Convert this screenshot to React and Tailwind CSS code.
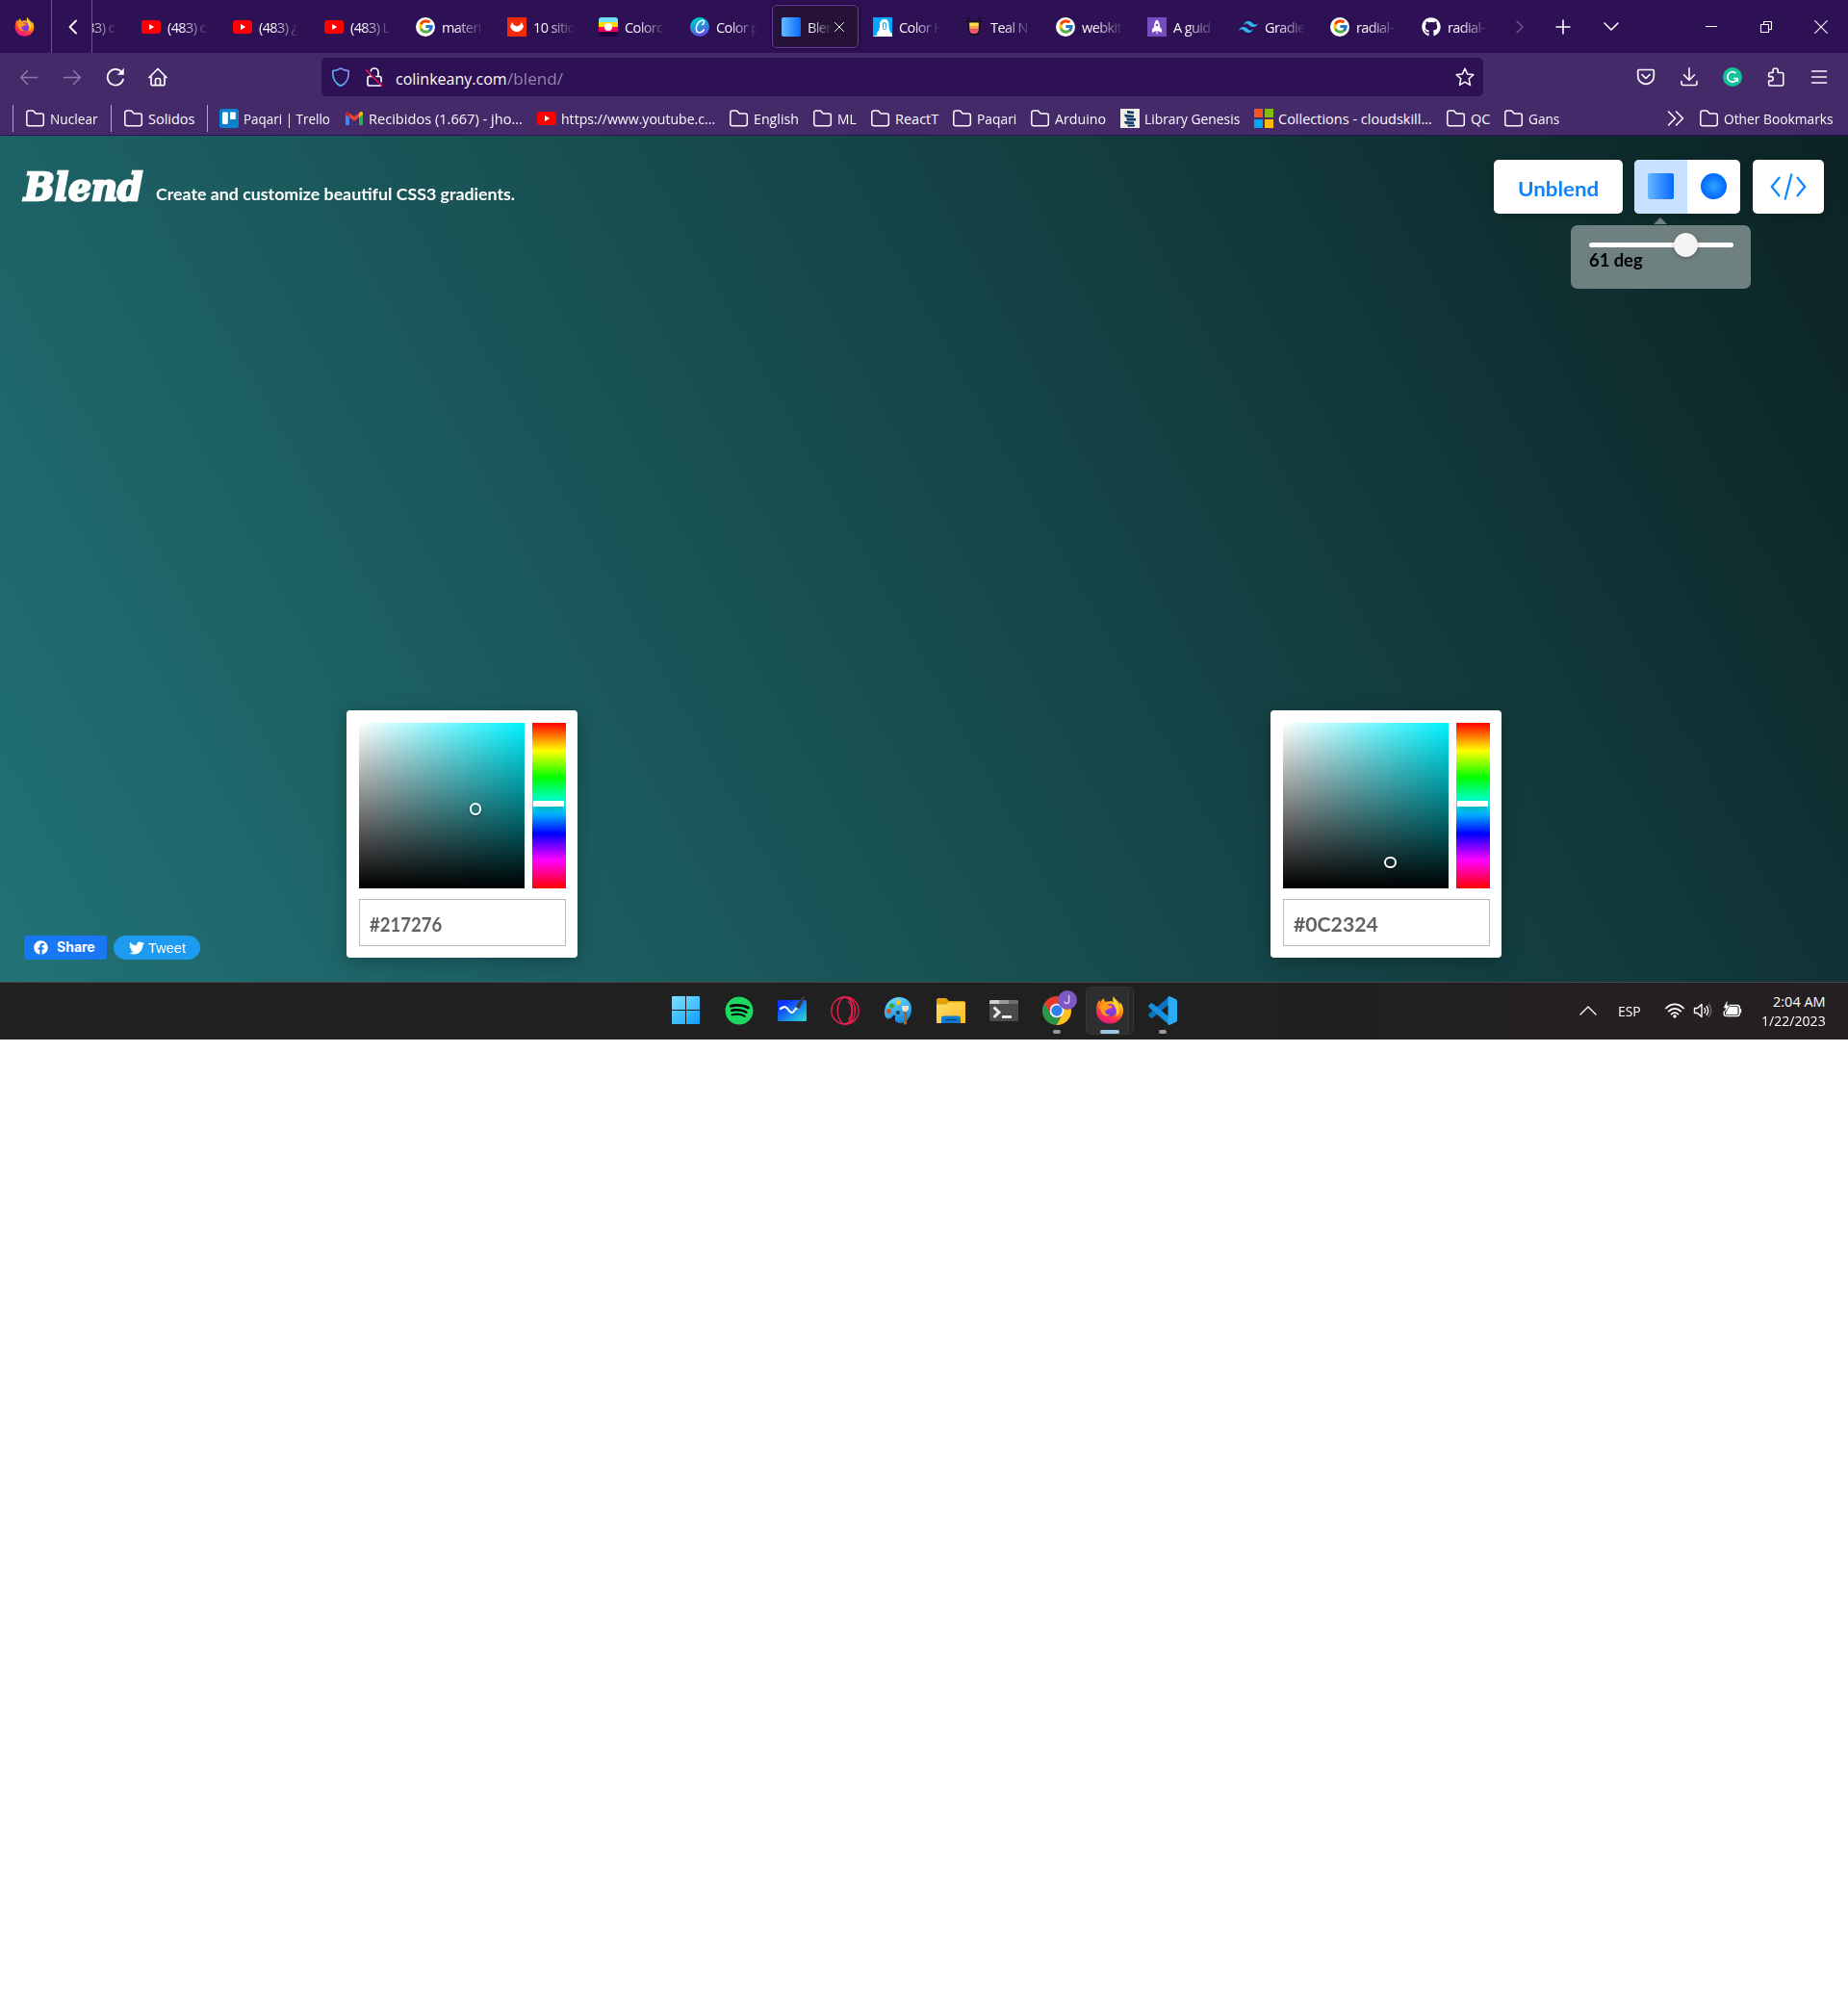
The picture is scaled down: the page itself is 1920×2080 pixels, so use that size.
import React, { useLayoutEffect, useRef, useState } from "react";
import { FcGoogle } from "react-icons/fc";
import { FaFacebook, FaTwitter, FaGithub, FaSpotify } from "react-icons/fa";
import { SiTailwindcss } from "react-icons/si";

/* Text that is squeezed or stretched to fill a known width */
function Fit({ w, className = "", origin = "left center", children }) {
  const ref = useRef(null);
  const [k, setK] = useState(1);
  useLayoutEffect(() => {
    const measure = () => {
      const n = ref.current.offsetWidth;
      if (n) setK(w / n);
    };
    measure();
    document.fonts?.ready.then(measure);
  }, [w]);
  return (
    <span className="flex shrink-0" style={{ width: w }}>
      <span
        ref={ref}
        className={"shrink-0 whitespace-nowrap " + className}
        style={{ transform: `scaleX(${k})`, transformOrigin: origin }}
      >
        {children}
      </span>
    </span>
  );
}

function Stroke({ className = "", size = 20, w = 1.5, children, vb = "0 0 20 20" }) {
  return (
    <svg
      width={size}
      height={size}
      viewBox={vb}
      className={"shrink-0 " + className}
      fill="none"
      stroke="currentColor"
      strokeWidth={w}
      strokeLinecap="round"
      strokeLinejoin="round"
    >
      {children}
    </svg>
  );
}

function Firefox({ size, id }) {
  return (
    <svg width={size} height={size} viewBox="0 0 32 32" className="shrink-0">
      <defs>
        <linearGradient id={id + "a"} x1="0.8" y1="0" x2="0.3" y2="1">
          <stop offset="0" stopColor="#fff44f" />
          <stop offset=".4" stopColor="#ff980e" />
          <stop offset=".7" stopColor="#ff3647" />
          <stop offset="1" stopColor="#e31587" />
        </linearGradient>
        <radialGradient id={id + "b"} cx=".6" cy=".3" r=".7">
          <stop offset="0" stopColor="#b833e1" />
          <stop offset="1" stopColor="#5b3fe0" />
        </radialGradient>
      </defs>
      <path
        d="M20 1c-1 3-.5 4.500 1.500 6.500C19 6.500 14 6 11.500 7.500 10 6.500 9.500 5 9.700 3.500 7.500 4.500 6.300 6.500 5.700 8 5 7.500 4.700 6 4.700 5 2.500 7.500 1 11.500 1 17c0 8 6.500 14.500 15 14.500S31 25 31 17c0-4-1.500-7.500-4-9.500.3 1 .4 2 .2 3C26 6 21.500 5 20 1z"
        fill={`url(#${id}a)`}
      />
      <circle cx="16.500" cy="16.500" r="7" fill={`url(#${id}b)`} />
      <path d="M4 14c2-5 8-6 11-2.500 1.500 0 3.500.3 4 1.200-.8 1.600-3 1.600-4.500 2.300-1.500.8-1.700 2-3.500 2-.5 3 2.500 5.500 6 4.500-4 3-10 1-11-5z" fill="#ff9a1c" />
      <path d="M19 3c2 5 8 7 7.500 15-.5 3-2 5-3.500 6 1-4 1-8-2-12 1-3-2-5-2-9z" fill="#ffd93b" opacity=".85" />
    </svg>
  );
}

function YouTube() {
  return (
    <svg width="20" height="20" viewBox="0 0 20 20" className="shrink-0">
      <rect x="0" y="3" width="20" height="14" rx="3.200" fill="#f00" />
      <path d="M8 7l5.200 3L8 13z" fill="#fff" />
    </svg>
  );
}

function Google() {
  return (
    <span className="flex size-[20px] shrink-0 items-center justify-center rounded-full bg-white">
      <FcGoogle size={17} />
    </span>
  );
}

function Hostinger() {
  return (
    <svg width="20" height="20" viewBox="0 0 20 20" className="shrink-0">
      <rect width="20" height="20" fill="#f52a06" />
      <path d="M3 9.500L5.200 5l1.300 2.800L10 9.500l3.500-1.700L14.800 5 17 9.500l-2 3.500-3.500 2h-3L5 13z" fill="#fff" />
    </svg>
  );
}

function Coloro() {
  return (
    <svg width="20" height="20" viewBox="0 0 20 20" className="shrink-0">
      <path d="M0 5V3q0-3 3-3h14q3 0 3 3v2z" fill="#70dff8" />
      <rect y="5" width="20" height="5" fill="#ffdb00" />
      <rect y="10" width="20" height="5" fill="#f5005f" />
      <path d="M0 15h20v2q0 3-3 3H3q-3 0-3-3z" fill="#1f0440" />
      <circle cx="10" cy="10" r="4" fill="#fff" />
    </svg>
  );
}

function Canva() {
  return (
    <span className="flex size-[20px] shrink-0 items-center justify-center rounded-full bg-[linear-gradient(160deg,#00c4cc_20%,#3a7be0_60%,#7d2ae8)]">
      <Stroke size={15} w={1.900} className="text-white" vb="1 1 18 18">
        <path d="M12.500 7.500c2 0 3.500-4.500 1-5C9.500 1.700 5 7.500 5 12.500c0 3.500 1.500 5 4 5 2.300 0 4.300-1.500 5.500-3.500" />
      </Stroke>
    </span>
  );
}

function BlendIcon() {
  return <span className="size-[20px] shrink-0 rounded-[2px] bg-[linear-gradient(90deg,#66b8ff,#0a6cff)]" />;
}

function ColorHunt() {
  return (
    <svg width="20" height="20" viewBox="0 0 20 20" className="shrink-0">
      <rect width="20" height="20" fill="#00a8ff" />
      <path d="M6 20l-2.500-3.500C6 15 7 12 7 7.500 7 4 9 2 12 2s4.500 2 4.500 5.500c0 4 .5 6 2 8.500l1.500 1v3z" fill="#fff" />
      <path d="M9.800 7q2-4 4.400 0l-.4 5q-1.800 2-3.600 0z" fill="#00a8ff" />
      <path d="M11 7q1-1.500 2 0l.2 5h-2.400z" fill="#fff" />
      <path d="M0 20q6-3 11-2v2z" fill="#fff" />
    </svg>
  );
}

function Teal() {
  return (
    <svg width="20" height="20" viewBox="0 0 20 20" className="shrink-0">
      <circle cx="4.500" cy="1.500" r="1.200" fill="#17121c" />
      <circle cx="15.500" cy="1.500" r="1.200" fill="#17121c" />
      <path d="M.5 4.500h19M4.300 4.500V12q0 6 5.700 6t5.700-6V4.500" fill="none" stroke="#17121c" strokeWidth="2" />
      <path d="M5.200 5.500h9.600V9H5.200z" fill="#ffe14d" />
      <path d="M5.200 9h9.600v3.500H5.200z" fill="#ff9a56" />
      <path d="M5.200 12.500h9.600q0 4.500-4.800 4.500t-4.800-4.500z" fill="#f4586f" />
    </svg>
  );
}

function Rocket() {
  return (
    <svg width="20" height="20" viewBox="0 0 20 20" className="shrink-0">
      <rect width="20" height="20" fill="#744cbc" />
      <path d="M10 2.500C7.500 4.500 7 7 7 10L5 12.500V16l3-1.500h4l3 1.500v-3.500L13 10c0-3-.5-5.500-3-7.500zM9 15.500h2L10 18z" fill="#fff" />
      <circle cx="10" cy="8" r="1.300" fill="#744cbc" />
    </svg>
  );
}

function GitHub() {
  return <FaGithub size={20} className="shrink-0 text-white" />;
}
function Tailwind() {
  return <SiTailwindcss size={20} className="shrink-0 text-[#31b5f0]" />;
}

const TABS = [
  [YouTube, "(483) c"],
  [YouTube, "(483) c"],
  [YouTube, "(483) ¿"],
  [YouTube, "(483) L"],
  [Google, "materi"],
  [Hostinger, "10 sitio"],
  [Coloro, "Colorc"],
  [Canva, "Color p"],
  [BlendIcon, "Blen", true],
  [ColorHunt, "Color H"],
  [Teal, "Teal N"],
  [Google, "webkit"],
  [Rocket, "A guid"],
  [Tailwind, "Gradie"],
  [Google, "radial-"],
  [GitHub, "radial-"],
];

const UI = "font-['Open_Sans','Noto_Sans',sans-serif]";

function Tab({ Icon, label, active }) {
  if (active) {
    return (
      <div className="flex h-[45px] w-[95px] shrink-0">
        <div className="flex h-[45px] w-[90px] items-center rounded-[5px] border border-[#6a3aa2] bg-[#251236] pl-[9px] shadow-[0_0_4px_rgba(0,0,0,.5)]">
          <Icon />
          <span className="ml-[7px] w-[25px] overflow-hidden whitespace-nowrap pt-[2px] text-[14.5px] tracking-[-0.6px] [mask-image:linear-gradient(90deg,#000_10%,transparent)]">
            {label}
          </span>
          <Stroke size={12} w={1} vb="0 0 12 12" className="ml-[2px]">
            <path d="M1.500 1.500l9 9M10.500 1.500l-9 9" />
          </Stroke>
        </div>
      </div>
    );
  }
  return (
    <div className="flex h-[45px] w-[95px] shrink-0 items-center pl-[10px]">
      <Icon />
      <span className="ml-[7px] w-[52px] overflow-hidden whitespace-nowrap pt-[2px] text-[14.5px] tracking-[-0.6px] [mask-image:linear-gradient(90deg,#000_25%,transparent_84%)]">
        {label}
      </span>
    </div>
  );
}

function TabStrip() {
  return (
    <div className="flex h-[55px] items-center bg-[#2e1054]">
      <div className="flex h-full w-[53px] items-center pl-[15px]">
        <Firefox size={21} id="ffs" />
      </div>
      <div className="flex h-full w-[43px] items-center border-x border-[#6a5585] pl-[14px]">
        <Stroke size={16} w={1.800} vb="0 0 16 16">
          <path d="M11 1.500L4.500 8l6.500 6.500" />
        </Stroke>
      </div>
      <div className="w-[1466px] shrink-0 overflow-hidden py-[5px]">
        <div className="-ml-[54px] flex">
          {TABS.map(([Icon, label, active], i) => (
            <Tab key={i} Icon={Icon} label={label} active={active} />
          ))}
        </div>
      </div>
      <div className="flex w-[33px] justify-center text-[#6b5489]">
        <Stroke size={16} w={1.500} vb="0 0 16 16">
          <path d="M5 2l6 6-6 6" />
        </Stroke>
      </div>
      <div className="flex w-[57px] justify-center">
        <Stroke size={16} w={1.600} vb="0 0 16 16">
          <path d="M8 1v14M1 8h14" />
        </Stroke>
      </div>
      <div className="flex w-[44px] justify-center">
        <Stroke size={16} w={1.600} vb="0 0 16 16">
          <path d="M1 4l7 7 7-7" />
        </Stroke>
      </div>
      <div className="w-[53px]" />
      <div className="flex w-[58px] justify-center">
        <span className="h-px w-[12px] bg-white" />
      </div>
      <div className="flex w-[56px] justify-center">
        <Stroke size={14} w={1.100} vb="0 0 14 14">
          <path d="M1.500 4.500h8v8h-8zM4.500 4.500v-3h8v8h-3" />
        </Stroke>
      </div>
      <div className="flex w-[57px] justify-center">
        <Stroke size={14} w={1.100} vb="0 0 14 14">
          <path d="M.7.700l12.600 12.600M13.300.700L.7 13.300" />
        </Stroke>
      </div>
    </div>
  );
}

function NavBar() {
  return (
    <div className="flex h-[50px] items-center bg-[#452a6a]">
      <Stroke className="ml-[20px] text-[#8d7ba6]" w={1.500}>
        <path d="M18.500 10.500H2M8.500 3.500L1.700 10.500l6.800 7" />
      </Stroke>
      <Stroke className="ml-[25px] text-[#8d7ba6]" w={1.500}>
        <path d="M1.500 10.500H18M11.500 3.500l6.800 7-6.800 7" />
      </Stroke>
      <Stroke className="ml-[25px]" w={1.800}>
        <path d="M18 12.500A8.300 8.300 0 1 1 16.500 5" />
        <path d="M18.500 1.500v6h-6z" fill="currentColor" strokeWidth=".5" />
      </Stroke>
      <Stroke className="ml-[24px]" w={1.700}>
        <path d="M1 10.500L10 1.500l9 9M3 9v8.500q0 1.200 1.200 1.200h11.600q1.200 0 1.200-1.200V9M7.500 18.500V13q0-1.500 1.500-1.500h2q1.500 0 1.500 1.500v5.500" />
      </Stroke>
      <div className="ml-[160px] flex h-[40px] w-[1207px] items-center rounded-[5px] bg-[#2e1054] pr-[9px]">
        <svg width="20" height="20" viewBox="0 0 20 20" className="ml-[10px]" fill="none">
          <defs>
            <linearGradient id="shield" x1="0" y1="1" x2="1" y2="0">
              <stop offset="0" stopColor="#35d6f5" />
              <stop offset=".5" stopColor="#5ea5f5" />
              <stop offset="1" stopColor="#a88cf0" />
            </linearGradient>
          </defs>
          <path d="M10 .8c2.500 1.800 5 2.500 8.200 2.800.5 7-1.200 12.500-8.200 15.700C3 16.100 1.300 10.600 1.800 3.600 5 3.300 7.500 2.600 10 .8z" stroke="url(#shield)" strokeWidth="1.600" strokeLinejoin="round" />
        </svg>
        <Stroke className="ml-[15px]" w={1.700}>
          <path d="M6 9.500V5.200C6 2.800 7.700 1 10 1s4 1.800 4 4.200v4.300M4.500 9.500h11q1.500 0 1.500 1.500v6q0 2-2 2H5q-2 0-2-2v-6q0-1.500 1.500-1.500z" />
          <path d="M3.500 3l16 16" stroke="#2e1054" strokeWidth="1.800" />
          <path d="M1.500 3L18 19.300" stroke="#f0124c" strokeWidth="1.600" />
        </Stroke>
        <div className="ml-[12px] flex pt-[3px]">
          <Fit w={116} className="text-[16px] leading-[20px]">colinkeany.com</Fit>
          <Fit w={58} className="text-[16px] leading-[20px] text-[#9686ad]">/blend/</Fit>
        </div>
        <Stroke className="ml-auto" w={1.500}>
          <path d="M10 1.200l2.600 5.700 6.200.7-4.600 4.200 1.300 6.600-5.500-3.200-5.500 3.200 1.300-6.600L1.200 7.600l6.200-.7z" />
        </Stroke>
      </div>
      <Stroke className="ml-[159px]" w={1.700}>
        <path d="M3 2.500h14q1.300 0 1.300 1.300V9c0 4.800-3.700 8.300-8.300 8.300S1.700 13.800 1.700 9V3.800q0-1.300 1.300-1.300zM6 7.500l4 4 4-4" />
      </Stroke>
      <Stroke className="ml-[25px]" w={1.600}>
        <path d="M10 .8v12M4.500 7.800l5.500 5.400 5.500-5.400M2 14.500v2q0 2 2 2h12q2 0 2-2v-2" />
      </Stroke>
      <svg width="20" height="20" viewBox="0 0 20 20" className="ml-[25px]">
        <circle cx="10" cy="10" r="10" fill="#15c39a" />
        <path d="M13.500 6A5.200 5.200 0 1 0 15 11.500h-4M15.200 11.200V15" fill="none" stroke="#fff" strokeWidth="1.700" />
      </svg>
      <Stroke className="ml-[25px]" w={1.600}>
        <path d="M7 5.500V3.200C7 1.900 8.200 1 9.600 1s2.600.9 2.600 2.200v2.300h4q1.600 0 1.600 1.500v10.500q0 1.500-1.500 1.500H4.200q-1.500 0-1.500-1.500V14h2.500c1.300 0 2-1 2-2.200s-.7-2.200-2-2.200H2.700V7q0-1.500 1.500-1.500z" />
      </Stroke>
      <Stroke className="ml-[25px]" w={1.500}>
        <path d="M2.500 4h15M2.500 10h15M2.500 16h15" />
      </Stroke>
    </div>
  );
}

function Folder() {
  return (
    <Stroke w={1.500}>
      <path d="M3 2h4.500l2.600 3h6q2.200 0 2.200 2v8.500q0 2.200-2.200 2.200H3q-2.200 0-2.200-2.200V4.200Q.8 2 3 2z" />
    </Stroke>
  );
}
function Trello() {
  return (
    <svg width="20" height="20" viewBox="0 0 20 20" className="shrink-0">
      <rect width="20" height="20" rx="2.500" fill="#0b80cc" />
      <rect x="3" y="3.500" width="5.800" height="12.500" rx="1" fill="#fff" />
      <rect x="11" y="3.500" width="5.800" height="7.500" rx="1" fill="#fff" />
    </svg>
  );
}
function Gmail() {
  return (
    <svg width="20" height="20" viewBox="0 0 20 20" className="shrink-0">
      <path d="M1 5v11q0 1 1 1h3V8z" fill="#4285f4" />
      <path d="M15 8v9h3q1 0 1-1V5z" fill="#34a853" />
      <path d="M15 4.500V9l4-3V5c0-2-2-2.500-3-1.500z" fill="#fbbc04" />
      <path d="M5 9V4.500l5 3.800 5-3.800V9l-5 3.800z" fill="#ea4335" />
      <path d="M1 5v1l4 3V4.500L4 3.500C3 2.700 1 3 1 5z" fill="#c5221f" />
    </svg>
  );
}
function LibGen() {
  return (
    <svg width="20" height="20" viewBox="0 0 20 20" className="shrink-0">
      <rect width="20" height="20" fill="#f0efe6" />
      <path d="M7 2l7 .8v2.500L7 4.800zM4 5.800l10 1v2.500l-9-.5zM6 9.500l10 .5v2.500L7 12.500zM4 13l10 .5v2.500l-9-.2zM7 16.500h8v2l-7 .2z" fill="#12346b" />
    </svg>
  );
}
function Microsoft() {
  return (
    <span className="grid size-[20px] shrink-0 grid-cols-2 gap-[2px]">
      <span className="bg-[#f35325]" />
      <span className="bg-[#81bc06]" />
      <span className="bg-[#05a6f0]" />
      <span className="bg-[#ffba08]" />
    </span>
  );
}

function Mark({ Icon, label, w }) {
  return (
    <div className="mr-[15px] flex shrink-0 items-center gap-[5px]">
      <Icon />
      <span className="pt-[3px]">
        <Fit w={w} className="text-[14.5px] leading-[20px]">{label}</Fit>
      </span>
    </div>
  );
}

function Bookmarks() {
  return (
    <div className="flex h-[36px] items-center border-b border-[#2e1054] bg-[#452a6a]">
      <span className="ml-[13px] mr-[13px] h-[28px] w-px shrink-0 bg-[#b3a6c4]" />
      <Mark Icon={Folder} label="Nuclear" w={50} />
      <span className="-ml-[2px] mr-[13px] h-[28px] w-px shrink-0 bg-[#b3a6c4]" />
      <Mark Icon={Folder} label="Solidos" w={49} />
      <span className="-ml-[3px] mr-[12px] h-[28px] w-px shrink-0 bg-[#b3a6c4]" />
      <Mark Icon={Trello} label="Paqari | Trello" w={90} />
      <Mark Icon={Gmail} label="Recibidos (1.667) - jho..." w={160} />
      <Mark Icon={YouTube} label="https://www.youtube.c..." w={160} />
      <Mark Icon={Folder} label="English" w={47} />
      <Mark Icon={Folder} label="ML" w={20} />
      <Mark Icon={Folder} label="ReactT" w={45} />
      <Mark Icon={Folder} label="Paqari" w={41} />
      <Mark Icon={Folder} label="Arduino" w={53} />
      <Mark Icon={LibGen} label="Library Genesis" w={99} />
      <Mark Icon={Microsoft} label="Collections - cloudskill..." w={160} />
      <Mark Icon={Folder} label="QC" w={20} />
      <Mark Icon={Folder} label="Gans" w={32} />
      <Stroke className="ml-auto mr-[15px]" w={1.600}>
        <path d="M2.500 3l7 7-7 7M10.500 3l7 7-7 7" />
      </Stroke>
      <Mark Icon={Folder} label="Other Bookmarks" w={114} />
    </div>
  );
}

const SITE = "font-['Lato','Open_Sans',sans-serif]";

function Picker({ hex, dot }) {
  return (
    <div className="flex h-[257px] w-[240px] flex-col rounded-[4px] bg-white pl-[13px] pr-[12px] pt-[13px] shadow-[0_5px_20px_rgba(0,0,0,.25)]">
      <div className="flex justify-between">
        <div className="relative size-[172px] bg-[#00f2ff] bg-[linear-gradient(to_top,#000,rgba(0,0,0,0)),linear-gradient(to_right,#fff,rgba(255,255,255,0))]">
          <span className={"absolute rounded-full border-2 border-white shadow-[0_1px_3px_rgba(0,0,0,.4)] " + dot} />
        </div>
        <div className="relative h-[172px] w-[35px] bg-[linear-gradient(to_bottom,#f00_0%,#ff0_17%,#0f0_33%,#0ff_50%,#00f_67%,#f0f_83%,#f00_100%)]">
          <span className="absolute left-[1px] top-[81px] h-[6px] w-[32px] rounded-[1px] bg-white shadow-[0_3px_6px_rgba(0,0,0,.35)]" />
        </div>
      </div>
      <div className="mt-[11px] flex h-[49px] items-center border border-[#b9b9bb] pl-[10px] pt-[2px] text-[#626264]">
        <Fit w={hex === "#217276" ? 75 : 88} className="text-[20px] font-bold leading-[24px]">{hex}</Fit>
      </div>
    </div>
  );
}

function Page() {
  return (
    <div className={"flex h-[879px] flex-col bg-[linear-gradient(61deg,#217276,#0c2324)] text-white " + SITE}>
      <div className="flex h-[160px] items-start justify-between pl-[25px] pr-[25px] pt-[25px]">
        <div className="flex items-baseline pt-[5px]">
          <Fit w={123} className="font-['DejaVu_Serif',serif] text-[39px] font-bold italic leading-[46px] [-webkit-text-stroke:2.5px_white]">
            Blend
          </Fit>
          <span className="ml-[14px]">
            <Fit w={373} className="text-[17px] font-bold leading-[20px]">
              Create and customize beautiful CSS3 gradients.
            </Fit>
          </span>
        </div>
        <div className="flex text-[#0a84ff]">
          <div className="flex h-[56px] w-[134px] items-center rounded-[5px] bg-white pl-[25px] pt-[4px] shadow-[0_2px_10px_rgba(0,0,0,.2)]">
            <Fit w={84} className="text-[21px] font-bold leading-[26px]">Unblend</Fit>
          </div>
          <div className="relative ml-[12px] h-[56px] w-[110px]">
            <div className="flex h-full overflow-hidden rounded-[5px] bg-white shadow-[0_2px_10px_rgba(0,0,0,.2)]">
              <div className="flex w-[55px] items-center justify-center bg-[#c8e1ff] pb-[1px]">
                <span className="size-[27px] rounded-[2px] bg-[linear-gradient(90deg,#66b8ff,#0568ff)]" />
              </div>
              <div className="flex w-[55px] items-center justify-center pb-[1px]">
                <span className="size-[27px] rounded-full bg-[radial-gradient(circle,#2fa4ff,#0066ff_70%)]" />
              </div>
            </div>
            <div className="absolute -left-[66px] top-[60px] w-[187px]">
              <div className="ml-[86px] h-[7px] w-[14px] bg-[#6f817f] [clip-path:polygon(50%_0,100%_100%,0_100%)]" />
              <div className="mt-[1px] flex h-[66px] flex-col rounded-[7px] bg-[#6e807f] pl-[19px] pr-[18px] pt-[18px]">
                <div className="relative h-[5px] rounded-full bg-white">
                  <span className="absolute -top-[10px] left-[88px] size-[25px] rounded-full bg-[#f5f5f5] shadow-[0_1px_4px_rgba(0,0,0,.3)]" />
                </div>
                <span className="mt-[2px] text-black">
                  <Fit w={56} className="text-[18px] font-bold leading-[22px]">61 deg</Fit>
                </span>
              </div>
            </div>
          </div>
          <div className="ml-[13px] flex h-[56px] w-[74px] items-center justify-center rounded-[5px] bg-white pb-[1px] shadow-[0_2px_10px_rgba(0,0,0,.2)]">
            <svg width="38" height="28" viewBox="0 0 38 28" fill="none" stroke="currentColor" strokeWidth="2.200">
              <path d="M10 4L1.800 14 10 24M28 4l8.200 10L28 24M22.500.5l-7 27" />
            </svg>
          </div>
        </div>
      </div>
      <div className="mt-auto flex items-end pb-[25px]">
        <div className="mb-[-2px] flex w-[360px] pl-[25px]">
          <div className="flex h-[25px] w-[86px] items-center rounded-[3px] bg-[#1877f2] pl-[10px]">
            <FaFacebook size={15} />
            <span className="ml-[9px] pb-px font-['Inter',sans-serif]">
              <Fit w={40} className="text-[14px] font-bold leading-[18px]">Share</Fit>
            </span>
          </div>
          <div className="ml-[7px] flex h-[25px] w-[90px] items-center rounded-full bg-[#1d9bf0] pl-[16px]">
            <FaTwitter size={16} />
            <span className="ml-[4px] pt-px font-['Liberation_Sans',sans-serif]">
              <Fit w={39} className="text-[15px] leading-[18px]">Tweet</Fit>
            </span>
          </div>
        </div>
        <Picker hex="#217276" dot="left-[115px] top-[83px] w-[12px] h-[13px]" />
        <div className="w-[720px]" />
        <Picker hex="#0C2324" dot="left-[105px] top-[139px] w-[13px] h-[12px]" />
      </div>
    </div>
  );
}

function WinLogo() {
  return (
    <span className="grid size-[29px] grid-cols-2 gap-px overflow-hidden rounded-[1px]">
      <span className="bg-[linear-gradient(135deg,#83dcff,#4cc5ff)]" />
      <span className="bg-[linear-gradient(135deg,#67d2ff,#35b8ff)]" />
      <span className="bg-[linear-gradient(135deg,#58ccff,#2eb1ff)]" />
      <span className="bg-[linear-gradient(135deg,#3ebeff,#119cff)]" />
    </span>
  );
}
function Spotify() {
  return (
    <span className="flex size-[29px] items-center justify-center rounded-full bg-black">
      <FaSpotify size={30} className="shrink-0 text-[#1ed760]" />
    </span>
  );
}
function Whiteboard() {
  return (
    <svg width="30" height="30" viewBox="0 0 30 30" className="-mt-[2px]">
      <defs>
        <linearGradient id="wb" x1="0" y1="0" x2="1" y2="1">
          <stop offset=".2" stopColor="#0a36ff" />
          <stop offset="1" stopColor="#2be0d6" />
        </linearGradient>
      </defs>
      <rect y="5" width="30" height="22" rx="1.500" fill="url(#wb)" />
      <path d="M3 14c4-3 6-2 8 1s4 5 7 0" fill="none" stroke="#fff" strokeWidth="2.200" strokeLinecap="round" />
      <path d="M17 16l1.500-4 3 2.500z" fill="#ddd" />
      <path d="M19 11.500L25 2q1.500-1.500 3 .5L22.500 14z" fill="#3b3b3f" />
    </svg>
  );
}
function Opera() {
  return (
    <svg width="30" height="30" viewBox="0 0 30 30" fill="none" stroke="#ea1e4e" strokeWidth="1.400">
      <circle cx="15" cy="15" r="14.200" />
      <ellipse cx="15" cy="15" rx="7.800" ry="13.800" />
      <path d="M15 1.200C29 2 29 28 15 28.800" />
      <path d="M18 5.500c5.500 4 5.500 15 0 19" />
    </svg>
  );
}
function Paint() {
  return (
    <svg width="30" height="30" viewBox="0 0 30 30">
      <defs>
        <linearGradient id="pal" x1=".2" y1="0" x2=".6" y2="1">
          <stop offset="0" stopColor="#6bdcff" />
          <stop offset="1" stopColor="#1583d8" />
        </linearGradient>
      </defs>
      <path d="M16 1c8 0 13 5 13 12 0 8-5 15-11 15-4 0-6-2-6-4 0-3 1-4-1-4.500-2 1-3 4-6 4-3-.5-4-3-4-7C1 8 8 1 16 1z" fill="url(#pal)" />
      <circle cx="15.500" cy="6.500" r="2.500" fill="#ffbf14" />
      <circle cx="8.500" cy="10" r="2.500" fill="#35a82c" />
      <circle cx="5.500" cy="15.500" r="2.600" fill="#da5125" />
      <circle cx="15" cy="17" r="2" fill="#173b53" />
      <path d="M19 10h7v3.500l-2 2.500h-3l-2-2.500z" fill="#f0ddc7" />
      <path d="M21 16h3v13q-1.500 1.500-3 0z" fill="#b16214" />
    </svg>
  );
}
function Explorer() {
  return (
    <svg width="30" height="30" viewBox="0 0 30 30">
      <defs>
        <linearGradient id="fold" x1="0" y1="0" x2="1" y2="1">
          <stop offset="0" stopColor="#ffdd6b" />
          <stop offset="1" stopColor="#fbbd1a" />
        </linearGradient>
      </defs>
      <path d="M0 4q0-2 2-2h8l3 3h15q2 0 2 2v6H0z" fill="#e2a006" />
      <path d="M0 8.500h10l3-2.200h17V28H0z" fill="url(#fold)" />
      <path d="M5 28v-5q0-2.500 2.500-2.500h15Q25 20.500 25 23v5z" fill="#0f79cf" />
      <path d="M9 24.500h12" stroke="#063f83" strokeWidth="1.200" />
    </svg>
  );
}
function Terminal() {
  return (
    <svg width="30" height="30" viewBox="0 0 30 30">
      <rect y="4" width="30" height="22" rx="1.500" fill="#4b4b4d" />
      <path d="M0 8V5.500Q0 4 1.500 4H10v4z" fill="#cfcfcf" />
      <path d="M10 4h10v4H10z" fill="#9a9a9b" />
      <path d="M20 4h8.500Q30 4 30 5.500V8H20z" fill="#6d6d6f" />
      <path d="M4.500 11.500l5.500 5.200-5.500 5.300" fill="none" stroke="#e8e8e8" strokeWidth="3" />
      <path d="M13 21.500h10" stroke="#fff" strokeWidth="2.600" />
    </svg>
  );
}
function Chrome() {
  return (
    <div className="relative">
      <svg width="30" height="30" viewBox="0 0 30 30">
        <circle cx="15" cy="15" r="15" fill="#e33b2e" />
        <path d="M15 8h13.300A15 15 0 0 1 14.500 30L21.500 18z" fill="#fcc31e" />
        <path d="M2 7.500L8.800 18.800Q11 22.500 15 22.300L19 21.500 14.500 30A15 15 0 0 1 2 7.500z" fill="#229a4a" />
        <circle cx="15" cy="15" r="7.300" fill="#fff" />
        <circle cx="15" cy="15" r="5.700" fill="#2d7cf0" />
      </svg>
      <span className="absolute -right-[6px] -top-[6px] flex size-[20px] items-center justify-center rounded-full bg-[#7e57c2] font-['Roboto',sans-serif] text-[13px] leading-none text-[#e4dbf3]">
        J
      </span>
    </div>
  );
}
function VSCode() {
  return (
    <svg width="30" height="30" viewBox="0 0 30 30">
      <path d="M22 0l-1 9L4.500 22.500q-1 .5-2 0L.5 20.500q-.7-1 0-2z" fill="#0b74ba" />
      <path d="M22 30l-1-9L4.500 7.500q-1-.5-2 0L.5 9.500q-.7 1 0 2z" fill="#1590dd" />
      <path d="M22 0l7 3.200q1 .5 1 1.500v20.600q0 1-1 1.500L22 30q-1.500.2-1.500-1.500v-27Q20.500-.2 22 0z" fill="#2aabf5" />
    </svg>
  );
}

function Slot({ children, run }) {
  return (
    <div className="flex h-[59px] w-[55px] flex-col items-center pt-[13px]">
      <div className="flex h-[31px] items-center">{children}</div>
      {run && <span className="mt-[5px] h-[4px] w-[8px] rounded-full bg-[#9a9a9a]" />}
    </div>
  );
}

function Taskbar() {
  return (
    <div className={"flex h-[60px] border-t border-[#47474a] bg-[linear-gradient(90deg,#212122_0%,#202020_70%,#241f23_88%)] text-white " + UI}>
      <div className="flex w-[1640px] pl-[685px]">
        <Slot><WinLogo /></Slot>
        <Slot><Spotify /></Slot>
        <Slot><Whiteboard /></Slot>
        <Slot><Opera /></Slot>
        <Slot><Paint /></Slot>
        <Slot><Explorer /></Slot>
        <Slot><Terminal /></Slot>
        <Slot run><Chrome /></Slot>
        <div className="mt-[4px] flex h-[50px] w-[53px] shrink-0 pl-[3px]">
          <div className="h-[50px] w-[50px] shrink-0 rounded-[5px] border border-[#363637] bg-[#272728]">
            <div className="flex h-[48px] w-[44px] flex-col items-center rounded-[5px] border-r border-[#3b3b3d] bg-[#2e2e30] pl-[4px] pt-[8px]">
              <Firefox size={30} id="ffb" />
              <span className="mt-[6px] h-[4px] w-[20px] shrink-0 rounded-full bg-[#9bc8de]" />
            </div>
          </div>
        </div>
        <div className="w-[2px]" />
        <Slot run><VSCode /></Slot>
      </div>
      <div className="flex h-[59px] flex-1 items-center pb-[2px]">
        <Stroke size={20} w={1.300}>
          <path d="M2 14l8-8 8 8" />
        </Stroke>
        <div className="ml-[21px] pt-[2px]">
          <Fit w={24} className="text-[14.5px] leading-[20px]">ESP</Fit>
        </div>
        <Stroke className="ml-[25px]" w={1.700}>
          <path d="M1 7.500C6 2 14 2 19 7.500M3.800 10.700c3.500-3.800 8.900-3.800 12.400 0M6.600 13.700c2-2 4.800-2 6.800 0" />
          <circle cx="10" cy="16" r="1.400" fill="currentColor" strokeWidth=".5" />
        </Stroke>
        <Stroke className="ml-[9px]" w={1.400}>
          <path d="M1.500 7.500h3L9 3.500v13l-4.500-4h-3zM12 7.500q1.500 2.500 0 5M14.200 5.500q3 4.500 0 9" />
          <path d="M16.500 3.500q4.500 6.500 0 13" stroke="#6d6a6d" />
        </Stroke>
        <Stroke className="ml-[11px]" w={1.400}>
          <path d="M7 4.500h8q2.300 0 2.300 2.300v6.400q0 2.300-2.300 2.300H3.500q-2.300 0-2.300-2.300V11" />
          <path d="M7 6.800h7.800v6.400H3.800V12zM18.500 8.500v3.200" fill="currentColor" />
          <path d="M4.200.8L1 7h2.200l-.7 4L6.500 5H4.200z" fill="currentColor" strokeWidth=".4" />
        </Stroke>
        <div className="ml-auto mr-[23px] flex flex-col items-end pt-[2px]">
          <Fit w={55} className="text-[14.5px] leading-[20px]">2:04 AM</Fit>
          <Fit w={67} className="text-[14.5px] leading-[20px]">1/22/2023</Fit>
        </div>
      </div>
    </div>
  );
}

export default function App() {
  return (
    <div className="min-h-[2080px] w-[1920px] overflow-hidden bg-white">
      <div className={"text-[#fbfbfe] " + UI}>
        <TabStrip />
        <NavBar />
        <Bookmarks />
      </div>
      <Page />
      <Taskbar />
    </div>
  );
}
